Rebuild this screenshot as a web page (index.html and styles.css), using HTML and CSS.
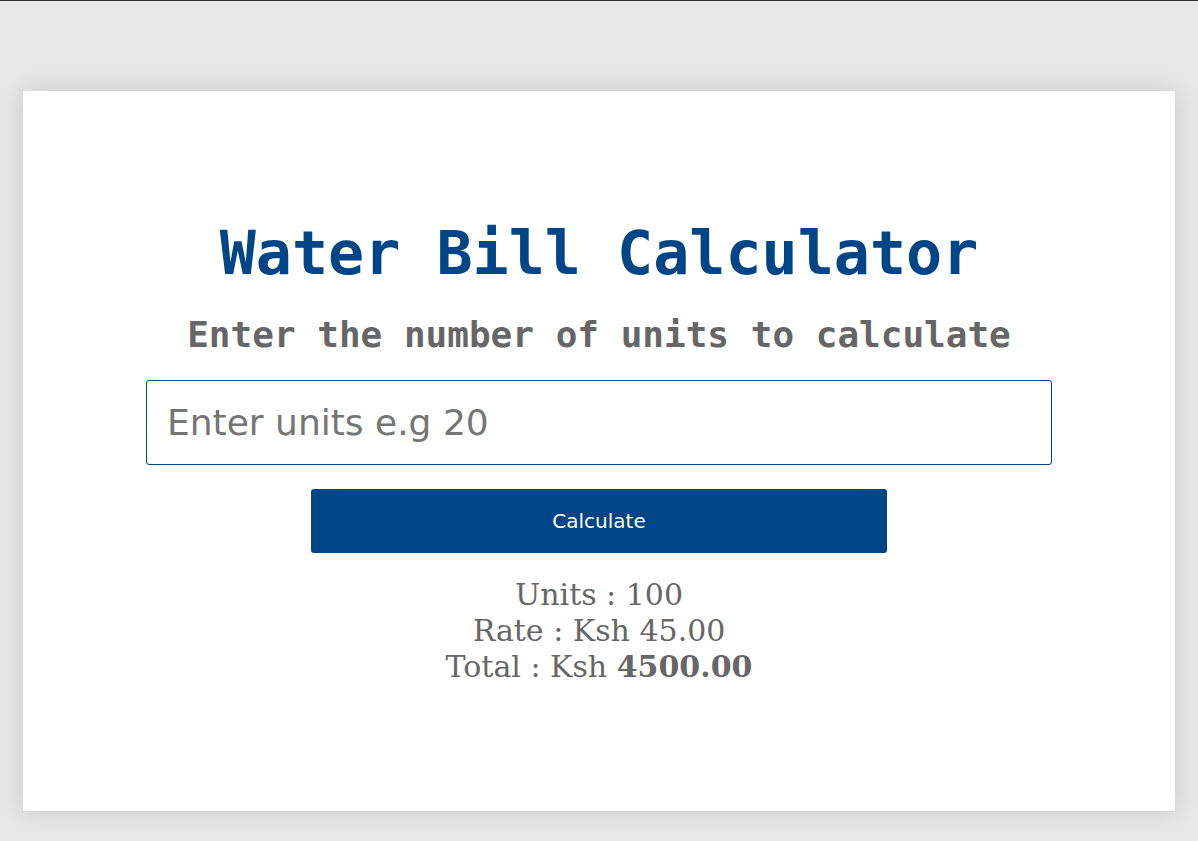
FILE: index.html
```html
<!DOCTYPE html>
<html>
<head>
<meta charset="utf-8">
<title>Water Bill Calculator</title>
<link rel="stylesheet" href="styles.css">
</head>
<body>
<main class="card">
  <h1 class="title">Water Bill Calculator</h1>
  <h2 class="subtitle">Enter the number of units to calculate</h2>
  <input class="units-input" type="text" placeholder="Enter units e.g 20">
  <button class="calc-btn" type="button">Calculate</button>
  <div class="results">
    <div class="row">Units : 100</div>
    <div class="row">Rate : Ksh 45.00</div>
    <div class="row">Total : Ksh <strong>4500.00</strong></div>
  </div>
</main>
</body>
</html>
```
FILE: styles.css
```css
html, body {
  margin: 0;
  padding: 0;
}
body {
  background: #e7e7e7;
  border-top: 1px solid #2e2e2e;
  padding: 90px 23px 30px;
  font-family: "DejaVu Sans", sans-serif;
}
.card {
  box-sizing: border-box;
  background: #fff;
  height: 720px;
  padding-top: 127px;
  box-shadow: 0 0 22px rgba(0, 0, 0, 0.14);
  display: flex;
  flex-direction: column;
  align-items: center;
  justify-content: flex-start;
}
.title {
  margin: 0;
  font-family: "DejaVu Sans Mono", monospace;
  font-weight: bold;
  font-size: 60px;
  color: #004586;
  line-height: 70px;
}
.subtitle {
  margin: 26px 0 0;
  font-family: "DejaVu Sans Mono", monospace;
  font-weight: bold;
  font-size: 36px;
  line-height: 42px;
  color: #666;
}
.units-input {
  box-sizing: border-box;
  margin-top: 24px;
  width: 906px;
  height: 85px;
  border: 1px solid #004586;
  border-radius: 3px;
  padding: 0 20px;
  font-family: "DejaVu Sans", sans-serif;
  font-size: 36px;
  color: #333;
  outline: none;
}
.units-input::placeholder {
  color: #757575;
}
.calc-btn {
  margin-top: 24px;
  width: 576px;
  height: 64px;
  border: none;
  border-radius: 3px;
  background: #004586;
  color: #fff;
  font-family: "DejaVu Sans", sans-serif;
  font-size: 20px;
}
.results {
  margin-top: 24px;
  text-align: center;
  font-family: "DejaVu Serif", serif;
  font-size: 30px;
  line-height: 36px;
  color: #666;
}
.results strong {
  font-weight: bold;
}
```
